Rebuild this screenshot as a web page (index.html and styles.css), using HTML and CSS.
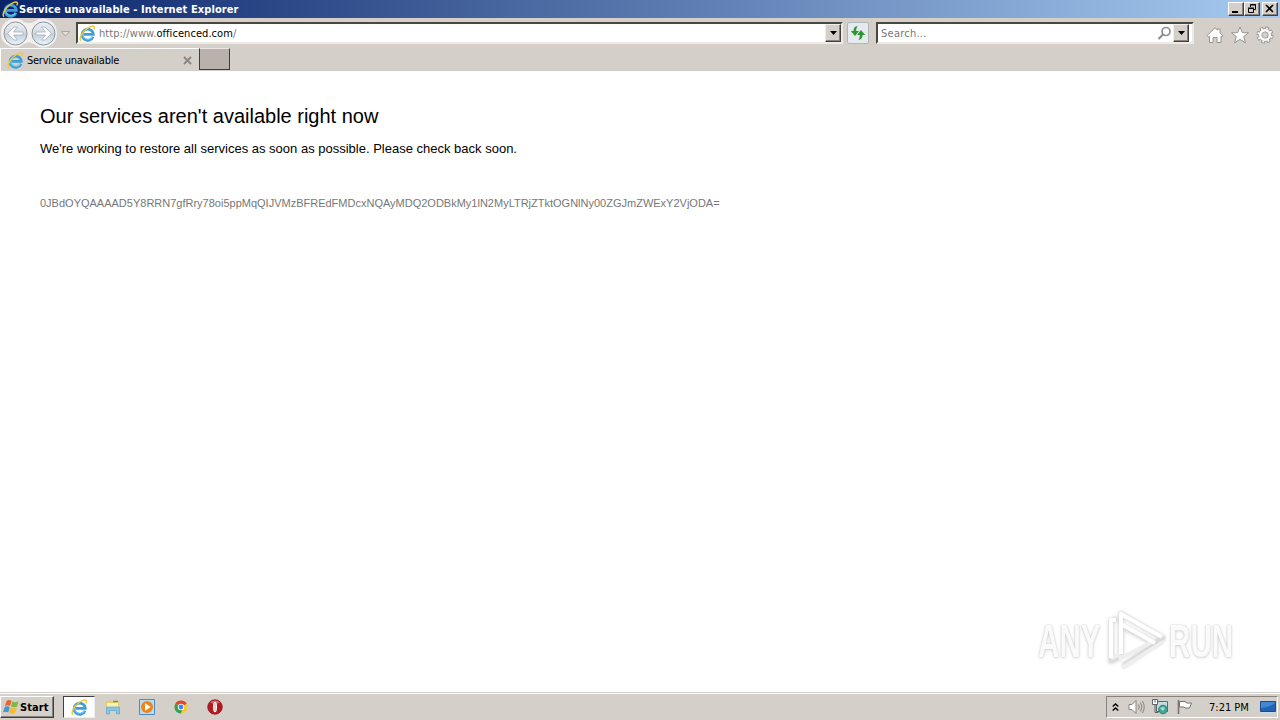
FILE: index.html
```
<!DOCTYPE html>
<html lang="en">
<head>
    <meta charset="utf-8">
    <title>Service unavailable</title>
    <link rel="stylesheet" href="styles.css">
</head>
<body>
    <svg class="defs" width="0" height="0">
        <symbol id="ie" viewBox="0 0 16 16">
            <path d="M13.200 11 A5.300 5.300 0 1 1 13.500 8.800 H4.500" fill="none" stroke="#3d9fd9" stroke-width="2.500"/>
            <path d="M12.600 11.200 A5 5 0 0 1 3.500 9" fill="none" stroke="#6fcbf2" stroke-width="1"/>
            <path d="M2 14.800 C-1 12.500 4.500 4 10.800 1.500 C14 .3 15.300 1.300 14 4.300" fill="none" stroke="#eec83c" stroke-width="1.400"/>
        </symbol>
    </svg>

    <div class="titlebar">
        <svg class="title-icon" width="17" height="17"><use href="#ie"/></svg>
        <span class="title">Service unavailable - Internet Explorer</span>
        <div class="window-buttons">
            <span class="win-btn"><svg width="14" height="12"><path d="M3 9h6" stroke="#000" stroke-width="2"/></svg></span>
            <span class="win-btn"><svg width="14" height="12"><path d="M5.500 4V1.500h5v5H9M5 2h6M3.500 5.500h5v4h-5zM3 5h6" fill="none" stroke="#000"/></svg></span>
            <span class="win-btn close"><svg width="14" height="12"><path d="M3 2l7 7M10 2L3 9" stroke="#000" stroke-width="1.600"/></svg></span>
        </div>
    </div>

    <div class="navbar">
        <svg class="history" width="76" height="30">
            <defs>
                <linearGradient id="orb" x2="0" y2="1">
                    <stop offset="0" stop-color="#edf0f4"/>
                    <stop offset=".48" stop-color="#d3dae3"/>
                    <stop offset=".52" stop-color="#c3ced9"/>
                    <stop offset="1" stop-color="#e8f6fc"/>
                </linearGradient>
            </defs>
            <path d="M1 15a14 14 0 0 1 23-11q5 2 10 0a14 14 0 0 1 23 11a14 14 0 0 1-23 11q-5-3-10 0A14 14 0 0 1 1 15z" fill="#f1f0ef"/>
            <circle cx="15.500" cy="15.500" r="11.500" fill="url(#orb)" stroke="#8f959b"/>
            <circle cx="43.500" cy="15.500" r="11.500" fill="url(#orb)" stroke="#8f959b"/>
            <path d="M7.500 15.500l6.500-6.500h3.500L13.500 14H23v3h-9.500l4 5H14z" fill="#fff" stroke="#a4afbb" stroke-width=".8"/>
            <path d="M51.500 15.500L45 9h-3.500l4 5H36v3h9.500l-4 5H45z" fill="#fff" stroke="#a4afbb" stroke-width=".8"/>
            <path d="M61.500 13.500h8l-4 4.500z" fill="#e3dfdb" stroke="#aaa5a0"/>
        </svg>
        <div class="field address">
            <svg class="site-icon" width="17" height="17"><use href="#ie"/></svg>
            <span class="url">http://www.<b>officenced.com</b>/</span>
            <span class="drop"><svg width="7" height="4"><path d="M0 0h7L3.500 4z"/></svg></span>
        </div>
        <div class="refresh">
            <svg width="16" height="16" fill="#2d962d">
                <path d="M7.500 1Q3.500 1.500 3.500 6H.8L5 11l4-5H6.200Q6 3.500 7.500 1z"/>
                <path d="M8.500 15Q12.500 14.500 12.500 10h2.700L11 5 7 10h2.800Q10 12.500 8.500 15z"/>
            </svg>
        </div>
        <div class="field search">
            <span class="placeholder">Search...</span>
            <svg class="lens" width="15" height="15"><circle cx="9" cy="5.500" r="4" fill="#fff" stroke="#8d8d8d" stroke-width="1.700"/><path d="M6 8.500L1.500 13" stroke="#8d8d8d" stroke-width="2.200"/></svg>
            <span class="drop"><svg width="7" height="4"><path d="M0 0h7L3.500 4z"/></svg></span>
        </div>
        <div class="tools">
            <svg width="18" height="18" fill="#fff" stroke="#979491"><path d="M1.200 9.500L9 1.700l2.500 2.500V3H14v4l3 2.700-1.300 1.200L15 10.300V16.500h-4v-5H7v5H3.500v-6.200l-1 .8z"/></svg>
            <svg width="18" height="18" fill="#fff" stroke="#979491"><path d="M9 .8l2.300 5.800 6.200.2-4.800 3.800 1.700 6.200L9 13.400l-5.400 3.400 1.700-6.200L.5 6.800l6.200-.2z"/></svg>
            <svg width="18" height="18">
                <g fill="none">
                    <circle cx="9" cy="9" r="6.700" stroke="#979491" stroke-width="3.600" stroke-dasharray="3.400 1.862"/>
                    <circle cx="9" cy="9" r="4.700" stroke="#979491" stroke-width="4"/>
                    <circle cx="9" cy="9" r="6.700" stroke="#fff" stroke-width="2" stroke-dasharray="1.800 3.462" stroke-dashoffset="-.8"/>
                    <circle cx="9" cy="9" r="4.800" stroke="#fff" stroke-width="2.400"/>
                </g>
            </svg>
        </div>
    </div>

    <div class="tabs">
        <div class="tab">
            <svg width="17" height="17"><use href="#ie"/></svg>
            <span class="tab-label">Service unavailable</span>
            <svg class="tab-close" width="9" height="9"><path d="M1 1l7 7M8 1L1 8" stroke="#898580" stroke-width="1.900"/></svg>
        </div>
        <div class="new-tab"></div>
    </div>

    <div class="page">
        <h1>Our services aren't available right now</h1>
        <p class="message">We're working to restore all services as soon as possible. Please check back soon.</p>
        <p class="ref">0JBdOYQAAAAD5Y8RRN7gfRry78oi5ppMqQIJVMzBFREdFMDcxNQAyMDQ2ODBkMy1lN2MyLTRjZTktOGNlNy00ZGJmZWExY2VjODA=</p>
        <div class="watermark">
            <span class="mark-any">ANY</span>
            <svg width="62" height="66" fill="none" stroke-linejoin="round">
                <g class="mark-shadow" stroke="#d6d6d6" stroke-width="6">
                    <path d="M16 48V6L58 30 18 58"/>
                    <path d="M12 11L6 13v40l9-4M17 18l34 18"/>
                </g>
                <path d="M6 51l9-5M14 51l35-18M17 60l41-26" stroke="#eee" stroke-width="4"/>
                <g stroke="#fff" stroke-width="4">
                    <path d="M16 46V6L57 29M16 16L50 35"/>
                    <path d="M11 12H6v38"/>
                </g>
            </svg>
            <span class="mark-run">RUN</span>
        </div>
    </div>

    <div class="taskbar">
        <div class="start">
            <svg width="17" height="16">
                <path d="M3.500 2Q6 0 8.500 1.800L7 7Q4.500 5.500 2 7z" fill="#e8642b"/>
                <path d="M9.500 2.300Q12 4 15.500 2.300L14 7.500Q11 9 8 7.400z" fill="#80b743"/>
                <path d="M1.700 8Q4.300 6.500 6.800 8.200L5.300 13.500Q3 12 0 13.200z" fill="#4694d8"/>
                <path d="M7.700 8.500Q10.500 10 13.700 8.500L12 14Q9 15.500 6.200 13.800z" fill="#f2bd32"/>
            </svg>
            <span>Start</span>
        </div>
        <div class="task active"><svg width="17" height="17"><use href="#ie"/></svg></div>
        <div class="task">
            <svg width="16" height="16">
                <path d="M1 2.500l5-1 1 1.500h7v9H1z" fill="#e9c968"/>
                <path d="M2 4h11v6H2z" fill="#fbf0b6"/>
                <path d="M8 2.500h5" stroke="#57a64c" stroke-width="1.500"/>
                <path d="M1.500 8h13v7h-3v-3.500h-7V15h-3z" fill="#84c5e9" stroke="#5ea6ce" stroke-width=".7"/>
            </svg>
        </div>
        <div class="task">
            <svg width="16" height="16">
                <path d="M.5 .5h15v15H.5z" fill="#b8dcf5" stroke="#4a8cc6"/>
                <circle cx="8" cy="8" r="6" fill="#ee8518"/>
                <path d="M6 4.300v7.400L11.700 8z" fill="#fff"/>
            </svg>
        </div>
        <div class="task">
            <svg width="16" height="16">
                <circle cx="8" cy="8" r="6.500" fill="#fbc928"/>
                <path d="M8 8L2.400 4.700A6.500 6.500 0 0 1 13.600 4.700z" fill="#df4436"/>
                <path d="M2.400 4.700A6.500 6.500 0 0 0 7.800 14.500L10 9z" fill="#30a054"/>
                <circle cx="8" cy="8" r="3.200" fill="#fff"/><circle cx="8" cy="8" r="2.400" fill="#4286e8"/>
            </svg>
        </div>
        <div class="task">
            <svg width="16" height="16">
                <circle cx="8" cy="8" r="7.300" fill="#b51920" stroke="#89161b" stroke-width=".7"/>
                <path d="M3 3.500Q8-.5 13 3.500Q8 6 3 3.500" fill="#d56664"/>
                <ellipse cx="8" cy="8" rx="2" ry="5.300" fill="#fff"/>
                <path d="M8 4v8" stroke="#b8a6a3"/>
            </svg>
        </div>
        <div class="tray">
            <svg class="chevrons" width="7" height="9" fill="none" stroke="#000" stroke-width="1.400"><path d="M.7 3.500l2.800-2.500 2.800 2.500M.7 7.500L3.500 5l2.800 2.500"/></svg>
            <svg class="speaker" width="17" height="16" fill="none" stroke="#85827f"><path d="M1 5.500h3l4-4v13l-4-4H1z" fill="#fff"/><path d="M10.500 5.500q1.500 2.500 0 5M12.500 3.500q3 4.500 0 9M14.500 2q3.500 6 0 12"/></svg>
            <svg class="network" width="17" height="16" fill="none">
                <path d="M4.500 2.500h11v10h-11z" fill="#c3dce2" stroke="#596b70"/>
                <circle cx="11" cy="10.500" r="4.300" fill="#3fa79a" stroke="#347e7c"/>
                <path d="M8 9l3-1 2 1-2 3z" fill="#a6e0c5"/>
                <path d="M.5 .5h5v5h-5z" fill="#fff" stroke="#656565"/>
                <path d="M3 .5v3M3 5.500v8h3.500" stroke="#656565"/>
            </svg>
            <svg class="flag" width="17" height="16"><path d="M2.500 1v14" stroke="#77736f" stroke-width="1.600"/><path d="M3.500 2.500h6l1 1.500h5l-2 5H9L8 8H3.500z" fill="#fff" stroke="#77736f"/></svg>
            <span class="clock">7:21 PM</span>
            <svg class="desktop" width="16" height="14"><path d="M.5 1.500h15v10H.5z" fill="#2263b4" stroke="#224b84"/><path d="M1 8Q8 8 15 3V2H1z" fill="#3e88d5"/><path d="M1 12.500h14" stroke="#c8d9ec"/></svg>
        </div>
    </div>
</body>
</html>
```
FILE: styles.css
```
* {
    box-sizing: border-box;
}

body {
    margin: 0;
    width: 1280px;
    height: 720px;
    overflow: hidden;
    display: flex;
    flex-direction: column;
    background: #d5cfc9;
    font-family: "DejaVu Sans Condensed", "DejaVu Sans", sans-serif;
    font-size: 11px;
    color: #000;
}

svg {
    display: block;
    flex: none;
}

span {
    white-space: nowrap;
}

.defs {
    position: absolute;
}

.titlebar {
    height: 18px;
    flex: none;
    display: flex;
    align-items: center;
    padding: 0 2px;
    background: linear-gradient(to right, #0a246a, #a6caf0);
}

.title {
    color: #fff;
    font-weight: bold;
    font-size: 11px;
    letter-spacing: 0.09px;
}

.window-buttons {
    display: flex;
    margin-left: auto;
}

.win-btn {
    width: 16px;
    height: 14px;
    background: #d5cfc9;
    border: 1px solid;
    border-color: #fff #404040 #404040 #fff;
    box-shadow: inset -1px -1px #87827d;
}

.close {
    margin-left: 2px;
}

.navbar {
    height: 30px;
    flex: none;
    display: flex;
    align-items: flex-start;
}

.field {
    height: 22px;
    margin-top: 4px;
    display: flex;
    align-items: center;
    background: #fff;
    border: 2px solid;
    border-color: #4a4640 #eeeae6 #eeeae6 #4a4640;
}

.address {
    width: 767px;
    padding-left: 1px;
}

.site-icon {
    margin-right: 3px;
}

.url,
.placeholder {
    padding-top: 1px;
    color: #777;
    letter-spacing: 0.06px;
}

.placeholder {
    letter-spacing: 0.25px;
}

.url b {
    color: #000;
    font-weight: normal;
}

.drop {
    width: 16px;
    height: 18px;
    margin-left: auto;
    display: flex;
    align-items: center;
    justify-content: center;
    background: #d5cfc9;
    border: 1px solid;
    border-color: #eee #404040 #404040 #eee;
    box-shadow: inset -1px -1px #87827d;
}

.refresh {
    width: 22px;
    height: 22px;
    margin: 4px 7px 0 4px;
    display: flex;
    align-items: center;
    justify-content: center;
    background: #e4ebef;
    border: 1px solid #b2b5b7;
    border-radius: 2px;
}

.search {
    width: 318px;
    padding: 0 3px;
}

.lens {
    margin-left: auto;
}

.lens + .drop {
    margin-left: 1px;
}

.tools {
    display: flex;
    gap: 7px;
    margin: 8px 0 0 12px;
}

.tabs {
    height: 23px;
    flex: none;
    display: flex;
}

.tab {
    width: 199px;
    padding: 0 7px 0 6px;
    display: flex;
    align-items: center;
    border-top: 1px solid #fff;
    border-left: 1px solid #fff;
}

.tab-label {
    margin-left: 3px;
    letter-spacing: -0.26px;
}

.tab-close {
    margin-left: auto;
}

.new-tab {
    width: 31px;
    height: 22px;
    background: #b9b1ac;
    border: 1px solid;
    border-color: #e9e5e1 #403c38 #403c38 #403c38;
}

.page {
    position: relative;
    flex: 1;
    padding: 32px 40px 0;
    background: #fff;
    font-family: "Liberation Sans", Arial, sans-serif;
}

h1 {
    margin: 0;
    font-size: 20px;
    font-weight: normal;
    line-height: 26px;
}

.message {
    margin: 11px 0 0;
    font-size: 13px;
    line-height: 18px;
}

.ref {
    margin: 37px 0 0;
    font-size: 11px;
    line-height: 16px;
    color: #777;
}

/* overlay in the bottom right corner of the page */
.watermark {
    position: absolute;
    left: 1038px;
    top: 537px;
    display: flex;
    align-items: center;
    font-size: 47px;
    font-weight: bold;
    line-height: 66px;
    color: #fafafa;
    text-shadow: 0 0 2px #c6c6c6, 0 1px 4px #d4d4d4;
}

.watermark svg {
    margin: 0 2px 0 3px;
}

.mark-shadow {
    filter: blur(1.5px);
}

.mark-any,
.mark-run {
    width: 64px;
    transform: scaleX(0.63);
    transform-origin: left;
}

.taskbar {
    height: 28px;
    flex: none;
    display: flex;
    align-items: center;
    padding: 1px 2px 0 0;
    border-top: 1px solid #d5cfc9;
    box-shadow: inset 0 1px #fff;
}

.start {
    width: 54px;
    height: 22px;
    margin-right: 9px;
    padding-left: 2px;
    display: flex;
    align-items: center;
    font-weight: bold;
    letter-spacing: 0.1px;
    border: 1px solid;
    border-color: #fff #404040 #404040 #fff;
    box-shadow: inset -1px -1px #87827d;
}

.task {
    width: 32px;
    height: 22px;
    margin-right: 2px;
    display: flex;
    align-items: center;
    justify-content: center;
}

.active {
    background: #fff;
    border: 1px solid;
    border-color: #404040 #eee #eee #404040;
}

.tray {
    width: 172px;
    height: 22px;
    margin-left: auto;
    padding: 0 1px 0 5px;
    display: flex;
    align-items: center;
    border: 1px solid;
    border-color: #87827d #fff #fff #87827d;
}

.speaker {
    margin-left: 9px;
}

.network {
    margin-left: 7px;
}

.flag {
    margin-left: 7px;
}

.clock {
    margin-left: 16px;
}

.desktop {
    margin-left: auto;
}
```
